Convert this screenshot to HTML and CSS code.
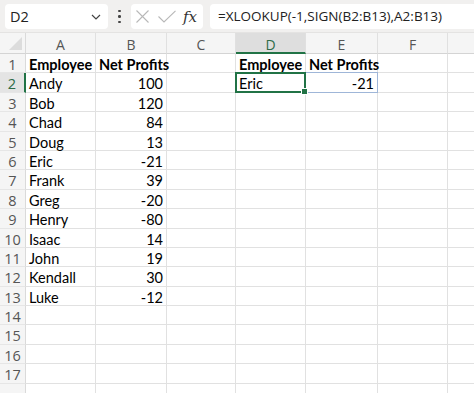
FILE: index.html
```html
<!DOCTYPE html>
<html>
<head>
<meta charset="utf-8">
<link rel="stylesheet" href="styles.css">
</head>
<body>
<div class="app">
  <div class="toolbar">
    <div class="namebox">
      <span class="nb-text">D2</span>
      <svg class="chev" width="10" height="6" viewBox="0 0 10 6"><path d="M1 1 L5 5 L9 1" fill="none" stroke="#444" stroke-width="1.2"/></svg>
    </div>
    <div class="dots"><i></i><i></i><i></i></div>
    <div class="fxbox">
      <svg width="13" height="13" viewBox="0 0 13 13"><path d="M0.5 0.5 L12.5 12.5 M12.5 0.5 L0.5 12.5" stroke="#b8b8b8" stroke-width="1.1" fill="none"/></svg>
      <svg width="18" height="13" viewBox="0 0 18 13"><path d="M0.5 6.5 L6 12 L17.5 0.8" stroke="#b8b8b8" stroke-width="1.1" fill="none"/></svg>
      <span class="fx">fx</span>
    </div>
    <div class="formula">=XLOOKUP(-1,SIGN(B2:B13),A2:B13)</div>
  </div>
  <div class="grid">
    <div class="corner"><span class="tri"></span></div>
    <div class="ch">A</div><div class="ch">B</div><div class="ch">C</div><div class="ch ch-sel">D</div><div class="ch">E</div><div class="ch">F</div><div class="ch"></div>

    <div class="rh">1</div><div class="c b">Employee</div><div class="c b">Net Profits</div><div class="c"></div><div class="c b">Employee</div><div class="c b">Net Profits</div><div class="c"></div><div class="c"></div>
    <div class="rh rh-sel">2</div><div class="c">Andy</div><div class="c n">100</div><div class="c"></div><div class="c sel">Eric<span class="spill"></span><span class="selbox"></span></div><div class="c n">-21</div><div class="c"></div><div class="c"></div>
    <div class="rh">3</div><div class="c">Bob</div><div class="c n">120</div><div class="c"></div><div class="c"></div><div class="c"></div><div class="c"></div><div class="c"></div>
    <div class="rh">4</div><div class="c">Chad</div><div class="c n">84</div><div class="c"></div><div class="c"></div><div class="c"></div><div class="c"></div><div class="c"></div>
    <div class="rh">5</div><div class="c">Doug</div><div class="c n">13</div><div class="c"></div><div class="c"></div><div class="c"></div><div class="c"></div><div class="c"></div>
    <div class="rh">6</div><div class="c">Eric</div><div class="c n">-21</div><div class="c"></div><div class="c"></div><div class="c"></div><div class="c"></div><div class="c"></div>
    <div class="rh">7</div><div class="c">Frank</div><div class="c n">39</div><div class="c"></div><div class="c"></div><div class="c"></div><div class="c"></div><div class="c"></div>
    <div class="rh">8</div><div class="c">Greg</div><div class="c n">-20</div><div class="c"></div><div class="c"></div><div class="c"></div><div class="c"></div><div class="c"></div>
    <div class="rh">9</div><div class="c">Henry</div><div class="c n">-80</div><div class="c"></div><div class="c"></div><div class="c"></div><div class="c"></div><div class="c"></div>
    <div class="rh">10</div><div class="c">Isaac</div><div class="c n">14</div><div class="c"></div><div class="c"></div><div class="c"></div><div class="c"></div><div class="c"></div>
    <div class="rh">11</div><div class="c">John</div><div class="c n">19</div><div class="c"></div><div class="c"></div><div class="c"></div><div class="c"></div><div class="c"></div>
    <div class="rh">12</div><div class="c">Kendall</div><div class="c n">30</div><div class="c"></div><div class="c"></div><div class="c"></div><div class="c"></div><div class="c"></div>
    <div class="rh">13</div><div class="c">Luke</div><div class="c n">-12</div><div class="c"></div><div class="c"></div><div class="c"></div><div class="c"></div><div class="c"></div>
    <div class="rh">14</div><div class="c"></div><div class="c"></div><div class="c"></div><div class="c"></div><div class="c"></div><div class="c"></div><div class="c"></div>
    <div class="rh">15</div><div class="c"></div><div class="c"></div><div class="c"></div><div class="c"></div><div class="c"></div><div class="c"></div><div class="c"></div>
    <div class="rh">16</div><div class="c"></div><div class="c"></div><div class="c"></div><div class="c"></div><div class="c"></div><div class="c"></div><div class="c"></div>
    <div class="rh">17</div><div class="c"></div><div class="c"></div><div class="c"></div><div class="c"></div><div class="c"></div><div class="c"></div><div class="c"></div>
    <div class="rh"></div><div class="c"></div><div class="c"></div><div class="c"></div><div class="c"></div><div class="c"></div><div class="c"></div><div class="c"></div>
  </div>
</div>
</body>
</html>
```
FILE: styles.css
```css
* { box-sizing: border-box; }
html, body { margin: 0; padding: 0; background: #fff; }
.app {
  width: 474px;
  height: 393px;
  overflow: hidden;
  font-family: Lato, "Open Sans", sans-serif;
}
.toolbar {
  height: 33px;
  background: #f1f0ef;
  display: flex;
  align-items: flex-start;
  padding: 4px 0 0 5px;
  border-bottom: 1px solid #e4e3e2;
}
.namebox {
  width: 103px;
  height: 25px;
  background: #fff;
  border-radius: 4px;
  display: flex;
  align-items: center;
  justify-content: space-between;
  padding: 0 7px 0 5px;
}
.nb-text {
  font-family: "Open Sans", sans-serif;
  font-size: 14.5px;
  color: #222;
}
.dots {
  width: 23px;
  height: 25px;
  display: flex;
  flex-direction: column;
  align-items: center;
  justify-content: center;
  gap: 3px;
}
.dots i {
  display: block;
  width: 2.5px;
  height: 2.5px;
  border-radius: 50%;
  background: #444;
}
.fxbox {
  width: 72px;
  height: 25px;
  background: #fff;
  border-radius: 4px;
  display: flex;
  align-items: center;
  padding: 0 0 0 5px;
  gap: 9px;
}
.fx {
  font-family: "DejaVu Serif", "Liberation Serif", serif;
  font-style: italic;
  font-size: 15px;
  color: #333;
  margin-left: -2px;
}
.formula {
  margin-left: 7px;
  flex: 1;
  height: 25px;
  background: #fff;
  border-radius: 4px 0 0 4px;
  font-family: "Open Sans", sans-serif;
  font-size: 13.5px;
  color: #222;
  line-height: 25px;
  padding-left: 8px;
  white-space: nowrap;
}
.grid {
  display: grid;
  grid-template-columns: 26px 70px 71px 69px 70px 72px 70px 40px;
  grid-template-rows: 21px;
  grid-auto-rows: 19.4px;
}
.corner {
  background: #f5f5f5;
  border-right: 1px solid #dadada;
  border-bottom: 1px solid #d4d4d4;
  position: relative;
}
.tri {
  position: absolute;
  right: 3px;
  bottom: 3px;
  width: 0;
  height: 0;
  border-left: 13px solid transparent;
  border-bottom: 13px solid #dcdcdc;
}
.ch {
  background: #f5f5f5;
  border-right: 1px solid #e0e0e0;
  border-bottom: 1px solid #d4d4d4;
  text-align: center;
  font-family: "Open Sans", sans-serif;
  font-size: 14px;
  color: #555;
  line-height: 20px;
  padding-top: 2px;
}
.ch-sel {
  background: #dedede;
  color: #2e6b47;
  border-bottom: 2px solid #217346;
}
.rh {
  background: #f5f5f5;
  border-right: 1px solid #dadada;
  border-bottom: 1px solid #e6e6e6;
  text-align: center;
  font-family: "Open Sans", sans-serif;
  font-size: 14.5px;
  color: #555;
  line-height: 19px;
  padding-top: 1px;
}
.rh-sel {
  background: #e4e4e4;
  color: #2e6b47;
  border-right: 2px solid #217346;
}
.c {
  border-right: 1px solid #e1e1e1;
  border-bottom: 1px solid #e1e1e1;
  font-size: 14.5px;
  color: #000;
  padding: 2px 3px 0;
  line-height: 18px;
  white-space: nowrap;
  overflow: visible;
}
.b { font-weight: 700; }
.n { text-align: right; }
.sel { position: relative; }
.spill {
  position: absolute;
  left: -1px;
  top: -1px;
  width: 143px;
  height: 21px;
  border: 1px solid #9fb6d8;
  pointer-events: none;
}
.selbox {
  position: absolute;
  left: -1px;
  top: -1px;
  width: 71px;
  height: 21px;
  border: 2px solid #217346;
}
.selbox::after {
  content: "";
  position: absolute;
  right: -4px;
  bottom: -4px;
  width: 5px;
  height: 5px;
  background: #217346;
  border: 1px solid #fff;
}
```
